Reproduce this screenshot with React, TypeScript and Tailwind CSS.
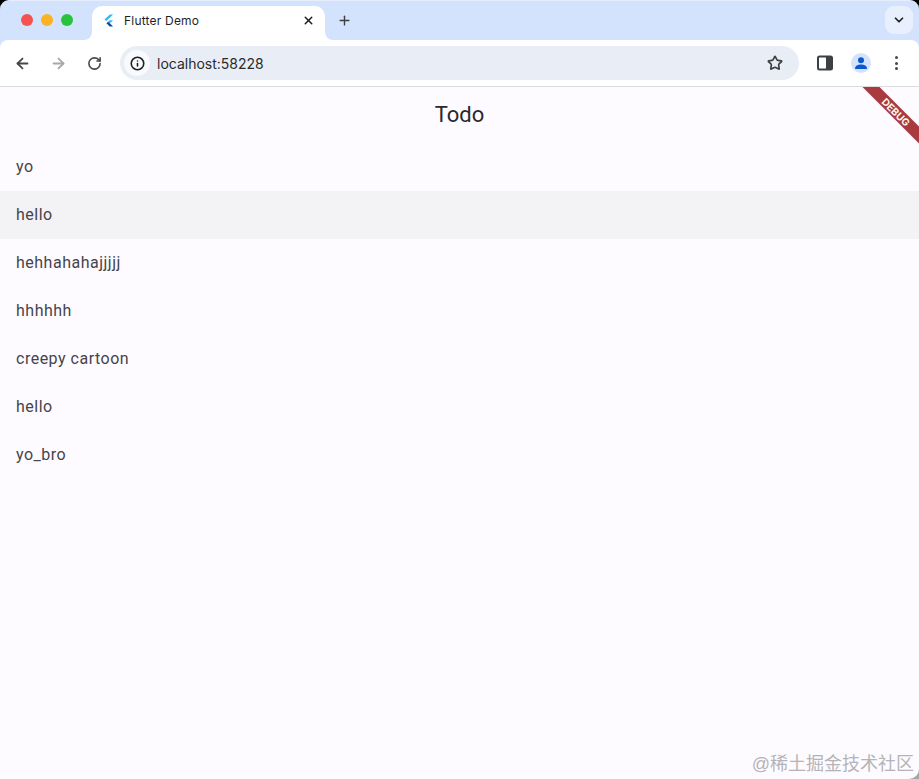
import { ArrowLeft, ArrowRight, ChevronDown, Info, Plus, RotateCw, Star, X } from 'lucide-react';

const todos = ['yo', 'hello', 'hehhahahajjjjj', 'hhhhhh', 'creepy cartoon', 'hello', 'yo_bro'];

const FlutterLogo = () => (
    <svg width="11" height="13" viewBox="0 0 12 14">
        <path d="M7.5 0.5 H11 L3.5 7.6 L1.6 6 Z" fill="#2fb6f5" />
        <path d="M7.3 6.6 H11 L7.4 10 L5.5 8.3 Z" fill="#2fb6f5" />
        <path d="M5.5 8.3 L7.4 10 L11 13.5 H7.4 L3.7 10 Z" fill="#0d47a1" />
    </svg>
);

const SidePanelIcon = () => (
    <svg width="16" height="16" viewBox="0 0 16 16">
        <rect x="0" y="0.5" width="16" height="15" rx="2.5" fill="#3c4043" />
        <rect x="2" y="2.5" width="7" height="11" rx="0.5" fill="#ffffff" />
    </svg>
);

const ProfileIcon = () => (
    <div className="flex h-5 w-5 items-center justify-center rounded-full bg-[#d3e3fd]">
        <svg width="14" height="14" viewBox="0 0 14 14">
            <circle cx="7" cy="4.2" r="3" fill="#0b57d0" />
            <path d="M1 13 C1 9.6 4 8.6 7 8.6 C10 8.6 13 9.6 13 13 Z" fill="#0b57d0" />
        </svg>
    </div>
);

const DebugBanner = () => (
    <div className="absolute right-0 top-0 h-[62px] w-[62px] overflow-hidden">
        <div className="absolute left-[-12px] top-[18px] flex h-[12px] w-[100px] rotate-45 items-center justify-center bg-[#a83a40] pl-[3px] text-[10px] font-bold leading-none text-[#fff4ec]">
            DEBUG
        </div>
    </div>
);

// the curve where the active tab runs into the toolbar
const TabFlare = ({ side }: { side: 'left' | 'right' }) => (
    <span className={`absolute bottom-0 h-[8px] w-[8px] bg-white ${side === 'left' ? 'left-[-8px]' : 'right-[-8px]'}`}>
        <span className={`block h-full w-full bg-[#d3e3fd] ${side === 'left' ? 'rounded-br-[8px]' : 'rounded-bl-[8px]'}`} />
    </span>
);

export default function App() {
    return (
        <div className="flex h-[779px] w-[919px] flex-col overflow-hidden font-['Inter','Liberation_Sans',sans-serif]">
            <div className="shrink-0 bg-black">
                <div className="flex h-[40px] rounded-t-[9px] border-t border-[#e6eefe] bg-[#d3e3fd]">
                    <div className="flex items-center gap-[8px] pb-[1px] pl-[21px] pr-[19px]">
                        <span className="h-[12px] w-[12px] rounded-full bg-[#f4514f]" />
                        <span className="h-[12px] w-[12px] rounded-full bg-[#fbb225]" />
                        <span className="h-[12px] w-[12px] rounded-full bg-[#27c33f]" />
                    </div>
                    <div className="relative mt-[5px] flex h-[34px] w-[233px] items-center rounded-t-[10px] bg-white pb-[5px] pl-[11px] pr-[10px]">
                        <TabFlare side="left" />
                        <FlutterLogo />
                        <span className="ml-[10px] flex-1 text-[12px] tracking-[0.2px] text-[#1f1f1f]">Flutter Demo</span>
                        <X size={13} strokeWidth={2.75} className="text-[#1f1f1f]" />
                        <TabFlare side="right" />
                    </div>
                    <div className="ml-[12px] flex items-center">
                        <Plus size={15} strokeWidth={2.25} className="text-[#3c4043]" />
                    </div>
                    <div className="ml-auto mr-[6px] mt-[5px] flex h-[28px] w-[28px] items-center justify-center rounded-[9px] bg-[#e9f0fd]">
                        <ChevronDown size={14} strokeWidth={3} className="text-[#1f1f1f]" />
                    </div>
                </div>
            </div>

            <div className="shrink-0 bg-[#d3e3fd]">
                <div className="flex h-[47px] items-center rounded-t-[8px] border-b border-[#dadce0] bg-white">
                    <ArrowLeft size={17} strokeWidth={2.5} className="ml-[14px] text-[#474747]" />
                    <ArrowRight size={17} strokeWidth={2.5} className="ml-[19px] text-[#a8a8a8]" />
                    <RotateCw size={15} strokeWidth={2.5} className="ml-[20px] text-[#474747]" />
                    <div className="ml-[18px] flex h-[34px] w-[679px] items-center rounded-full bg-[#e9eef6] pl-[4px] pr-[16px]">
                        <div className="flex h-[26px] w-[26px] items-center justify-center rounded-full bg-[#f8fafd]">
                            <Info size={15} strokeWidth={2.5} className="text-[#1f1f1f]" />
                        </div>
                        <span className="ml-[7px] flex-1 text-[14px] text-[#2b2b2b]">localhost:58228</span>
                        <Star size={16} strokeWidth={2.5} className="text-[#3c4043]" />
                    </div>
                    <div className="ml-[18px]">
                        <SidePanelIcon />
                    </div>
                    <div className="ml-[18px]">
                        <ProfileIcon />
                    </div>
                    <div className="ml-[24px] flex flex-col gap-[2.5px]">
                        <span className="h-[3px] w-[3px] rounded-full bg-[#474747]" />
                        <span className="h-[3px] w-[3px] rounded-full bg-[#474747]" />
                        <span className="h-[3px] w-[3px] rounded-full bg-[#474747]" />
                    </div>
                </div>
            </div>

            <div className="min-h-0 flex-1 bg-[#a6a6a6]">
                <div className="relative h-full rounded-br-[10px] bg-[#fdfbff]">
                    <div className="flex h-[56px] items-center justify-center pb-[1px] font-['Roboto','Liberation_Sans',sans-serif] text-[22px] text-[#2a282e]">
                        Todo
                    </div>
                    {todos.map((todo, i) => (
                        <div
                            key={i}
                            className={`flex h-[48px] items-center px-[16px] font-['Roboto','Liberation_Sans',sans-serif] text-[16px] tracking-[0.5px] text-[#46444b] ${i === 1 ? 'bg-[#f3f2f5]' : ''}`}
                        >
                            {todo}
                        </div>
                    ))}
                    <DebugBanner />
                    <div className="absolute bottom-[6px] right-[5px] font-['Liberation_Sans','Noto_Sans_CJK_SC',sans-serif] text-[18px] leading-none text-[#b4b4b8]">
                        @稀土掘金技术社区
                    </div>
                </div>
            </div>
        </div>
    );
}
